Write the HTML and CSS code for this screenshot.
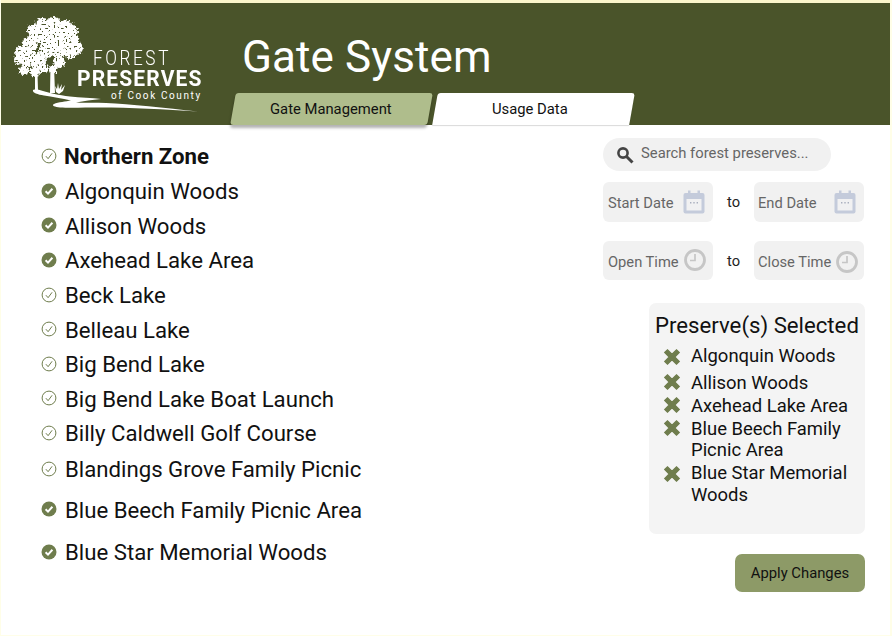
FILE: index.html
```html
<!DOCTYPE html>
<html lang="en">
<head>
<meta charset="utf-8">
<title>Gate System</title>
<link rel="stylesheet" href="styles.css">
</head>
<body>
<div class="page">
  <header class="header">
    <div class="logo">
      <svg class="logo-mark" width="190" height="100" viewBox="13 14 190 100" aria-hidden="true">
        <defs>
          <filter id="leafy" x="-15%" y="-15%" width="130%" height="130%" color-interpolation-filters="sRGB">
            <feTurbulence type="fractalNoise" baseFrequency="0.5" numOctaves="2" seed="7" result="n"/>
            <feDisplacementMap in="SourceGraphic" in2="n" scale="6" xChannelSelector="R" yChannelSelector="G" result="d"/>
            <feColorMatrix in="n" type="matrix" values="0 0 0 0 1  0 0 0 0 1  0 0 0 0 1  0 0 0 14 -4.1" result="holes"/>
            <feComposite in="d" in2="holes" operator="in"/>
          </filter>
        </defs>
        <g fill="#fff" filter="url(#leafy)">
          <circle cx="43" cy="26" r="8"/><circle cx="54" cy="25" r="8"/><circle cx="65" cy="28" r="8"/><circle cx="33" cy="30" r="6"/><circle cx="72" cy="31" r="6"/>
          <circle cx="36" cy="36" r="7"/><circle cx="48" cy="37" r="10"/><circle cx="60" cy="38" r="10"/><circle cx="71" cy="40" r="8"/>
          <circle cx="77" cy="48" r="6"/><circle cx="70" cy="52" r="7"/><circle cx="58" cy="50" r="8"/><circle cx="47" cy="50" r="8"/>
          <circle cx="59" cy="62" r="6"/><circle cx="53" cy="70" r="4"/>
          <circle cx="30" cy="45" r="8"/><circle cx="21" cy="52" r="6"/><circle cx="18" cy="60" r="4"/><circle cx="28" cy="58" r="9"/>
          <circle cx="38" cy="61" r="8"/><circle cx="24" cy="70" r="5"/><circle cx="35" cy="72" r="5"/><circle cx="44" cy="68" r="5"/>
        </g>
        <g fill="#fff">
          <path d="M35 74h2.500l.5 16.500h-3zM50.500 66h3.500l1 27h-5z"/>
          <path d="M56 92l-1-6 2 3 1-6 1 6 3-5-1 6 4-5-2 6-4 3z"/>
          <path d="M33 90C36 89 40 90 43 91C50 93 58 95 70 96.500C80 97.500 92 98 101 99C92 100 84 101 76 102.500C88 103 96 102.500 106 103C130 104 165 108 198 111.500C165 109.500 130 107.500 100 107.500C85 107.500 70 108 60 107.500C55 107 51 105.500 54 104C58 102 66 101.500 71 100.500C62 98 52 97 44 95.500C38 94.500 32 93 33 90Z"/>
        </g>
      </svg>
      <div class="logo-text">
        <span class="logo-forest">FOREST</span>
        <span class="logo-preserves">PRESERVES</span>
        <span class="logo-cook">of Cook County</span>
      </div>
    </div>
    <div class="heading">
      <h1 class="title">Gate System</h1>
      <nav class="tabs">
        <div class="tab tab-active"><span class="tab-label">Gate Management</span></div>
        <div class="tab tab-plain"><span class="tab-label tab-label-shift">Usage Data</span></div>
      </nav>
    </div>
  </header>
  <main class="content">
    <ul class="zones">
      <li class="zone zone-head"><svg class="check" viewBox="0 0 16 16"><circle cx="8" cy="8" r="6.9" fill="none" stroke="#6f7d4d" stroke-width="1"/><path d="M4.9 8.2l2.2 2.5 4-5.4" fill="none" stroke="#6f7d4d" stroke-width="1"/></svg><span>Northern Zone</span></li>
      <li class="zone"><svg class="check" viewBox="0 0 16 16"><circle cx="8" cy="8" r="7.5" fill="#6f7d4d"/><path d="M4.6 8.2l2.4 2.4 4.4-4.8" fill="none" stroke="#fff" stroke-width="2"/></svg><span>Algonquin Woods</span></li>
      <li class="zone"><svg class="check" viewBox="0 0 16 16"><circle cx="8" cy="8" r="7.5" fill="#6f7d4d"/><path d="M4.6 8.2l2.4 2.4 4.4-4.8" fill="none" stroke="#fff" stroke-width="2"/></svg><span>Allison Woods</span></li>
      <li class="zone"><svg class="check" viewBox="0 0 16 16"><circle cx="8" cy="8" r="7.5" fill="#6f7d4d"/><path d="M4.6 8.2l2.4 2.4 4.4-4.8" fill="none" stroke="#fff" stroke-width="2"/></svg><span>Axehead Lake Area</span></li>
      <li class="zone"><svg class="check" viewBox="0 0 16 16"><circle cx="8" cy="8" r="6.9" fill="none" stroke="#6f7d4d" stroke-width="1"/><path d="M4.9 8.2l2.2 2.5 4-5.4" fill="none" stroke="#6f7d4d" stroke-width="1"/></svg><span>Beck Lake</span></li>
      <li class="zone"><svg class="check" viewBox="0 0 16 16"><circle cx="8" cy="8" r="6.9" fill="none" stroke="#6f7d4d" stroke-width="1"/><path d="M4.9 8.2l2.2 2.5 4-5.4" fill="none" stroke="#6f7d4d" stroke-width="1"/></svg><span>Belleau Lake</span></li>
      <li class="zone"><svg class="check" viewBox="0 0 16 16"><circle cx="8" cy="8" r="6.9" fill="none" stroke="#6f7d4d" stroke-width="1"/><path d="M4.9 8.2l2.2 2.5 4-5.4" fill="none" stroke="#6f7d4d" stroke-width="1"/></svg><span>Big Bend Lake</span></li>
      <li class="zone"><svg class="check" viewBox="0 0 16 16"><circle cx="8" cy="8" r="6.9" fill="none" stroke="#6f7d4d" stroke-width="1"/><path d="M4.9 8.2l2.2 2.5 4-5.4" fill="none" stroke="#6f7d4d" stroke-width="1"/></svg><span>Big Bend Lake Boat Launch</span></li>
      <li class="zone"><svg class="check" viewBox="0 0 16 16"><circle cx="8" cy="8" r="6.9" fill="none" stroke="#6f7d4d" stroke-width="1"/><path d="M4.9 8.2l2.2 2.5 4-5.4" fill="none" stroke="#6f7d4d" stroke-width="1"/></svg><span>Billy Caldwell Golf Course</span></li>
      <li class="zone zone-gap-s"><svg class="check" viewBox="0 0 16 16"><circle cx="8" cy="8" r="6.9" fill="none" stroke="#6f7d4d" stroke-width="1"/><path d="M4.9 8.2l2.2 2.5 4-5.4" fill="none" stroke="#6f7d4d" stroke-width="1"/></svg><span>Blandings Grove Family Picnic</span></li>
      <li class="zone zone-gap-m"><svg class="check" viewBox="0 0 16 16"><circle cx="8" cy="8" r="7.5" fill="#6f7d4d"/><path d="M4.6 8.2l2.4 2.4 4.4-4.8" fill="none" stroke="#fff" stroke-width="2"/></svg><span>Blue Beech Family Picnic Area</span></li>
      <li class="zone zone-gap-l"><svg class="check" viewBox="0 0 16 16"><circle cx="8" cy="8" r="7.5" fill="#6f7d4d"/><path d="M4.6 8.2l2.4 2.4 4.4-4.8" fill="none" stroke="#fff" stroke-width="2"/></svg><span>Blue Star Memorial Woods</span></li>
    </ul>
    <aside class="side">
      <div class="search">
        <svg class="search-icon" viewBox="0 0 18 18"><circle cx="7" cy="7" r="4.6" fill="none" stroke="#444" stroke-width="2.6"/><path d="M10.5 10.5l6 6" stroke="#444" stroke-width="3"/></svg>
        <span>Search forest preserves...</span>
      </div>
      <div class="range">
        <div class="field"><span>Start Date</span><svg class="cal" viewBox="0 0 22 24"><rect x="0.500" y="3" width="21" height="20.500" rx="2" fill="#c4cbdb"/><path d="M3.500 9h15v11.500h-15z" fill="#f1f1f2"/><path d="M5 0.500h2.500v4H5zM14.500 0.500H17v4h-2.500z" fill="#c4cbdb"/><path d="M7 12h1.400v1.400H7zM10.300 12h1.400v1.400h-1.400zM13.600 12h1.400v1.400h-1.400z" fill="#aab0bf"/></svg></div>
        <span class="to">to</span>
        <div class="field field-end"><span>End Date</span><svg class="cal" viewBox="0 0 22 24"><rect x="0.500" y="3" width="21" height="20.500" rx="2" fill="#c4cbdb"/><path d="M3.500 9h15v11.500h-15z" fill="#f1f1f2"/><path d="M5 0.500h2.500v4H5zM14.500 0.500H17v4h-2.500z" fill="#c4cbdb"/><path d="M7 12h1.400v1.400H7zM10.300 12h1.400v1.400h-1.400zM13.600 12h1.400v1.400h-1.400z" fill="#aab0bf"/></svg></div>
      </div>
      <div class="range range-time">
        <div class="field"><span>Open Time</span><svg class="clock" viewBox="0 0 22 22"><circle cx="11" cy="11" r="9.500" fill="none" stroke="#c6c6c6" stroke-width="2.800"/><path d="M11 5v6.500H6" fill="none" stroke="#c6c6c6" stroke-width="1.700"/></svg></div>
        <span class="to">to</span>
        <div class="field field-end field-close"><span>Close Time</span><svg class="clock" viewBox="0 0 22 22"><circle cx="11" cy="11" r="9.500" fill="none" stroke="#c6c6c6" stroke-width="2.800"/><path d="M11 5v6.500H6" fill="none" stroke="#c6c6c6" stroke-width="1.700"/></svg></div>
      </div>
      <section class="selected">
        <h2 class="selected-title">Preserve(s) Selected</h2>
        <ul class="selected-list">
          <li class="pick"><svg class="x" viewBox="0 0 16 16"><path d="M1.500 4L4 1.500 8 5.500l4-4L14.500 4l-4 4 4 4L12 14.500l-4-4-4 4L1.500 12l4-4z" fill="#6f7d4d" stroke="#6f7d4d"/></svg><span>Algonquin Woods</span></li>
          <li class="pick pick-b"><svg class="x x-up" viewBox="0 0 16 16"><path d="M1.500 4L4 1.500 8 5.500l4-4L14.500 4l-4 4 4 4L12 14.500l-4-4-4 4L1.500 12l4-4z" fill="#6f7d4d" stroke="#6f7d4d"/></svg><span>Allison Woods</span></li>
          <li class="pick"><svg class="x x-up" viewBox="0 0 16 16"><path d="M1.500 4L4 1.500 8 5.500l4-4L14.500 4l-4 4 4 4L12 14.500l-4-4-4 4L1.500 12l4-4z" fill="#6f7d4d" stroke="#6f7d4d"/></svg><span>Axehead Lake Area</span></li>
          <li class="pick"><svg class="x x-up" viewBox="0 0 16 16"><path d="M1.500 4L4 1.500 8 5.500l4-4L14.500 4l-4 4 4 4L12 14.500l-4-4-4 4L1.500 12l4-4z" fill="#6f7d4d" stroke="#6f7d4d"/></svg><span>Blue Beech Family Picnic Area</span></li>
          <li class="pick"><svg class="x" viewBox="0 0 16 16"><path d="M1.500 4L4 1.500 8 5.500l4-4L14.500 4l-4 4 4 4L12 14.500l-4-4-4 4L1.500 12l4-4z" fill="#6f7d4d" stroke="#6f7d4d"/></svg><span>Blue Star Memorial Woods</span></li>
        </ul>
      </section>
      <button class="apply" type="button">Apply Changes</button>
    </aside>
  </main>
</div>
</body>
</html>
```
FILE: styles.css
```css
* { box-sizing: border-box; }
html, body { margin: 0; height: 100%; }
body { background: #fffee8; font-family: Roboto, "Liberation Sans", sans-serif; color: #111; overflow: hidden; }
.page { width: 889px; height: 635px; margin-left: 1px; border-top: 3px solid #fcf6cb; background: #fff; display: flex; flex-direction: column; }
.header { height: 122px; background: #4a542a; display: flex; flex: none; }
.logo { width: 230px; padding: 11px 0 0 12px; position: relative; flex: none; }
.logo-mark { display: block; }
.logo-text { position: absolute; left: 76px; top: 45px; color: #fff; display: flex; flex-direction: column; width: 125px; }
.logo-forest { font-size: 20px; font-weight: 300; line-height: 20px; letter-spacing: 3px; margin-left: 16px; transform: scaleX(.86); transform-origin: left; white-space: nowrap; }
.logo-preserves { font-size: 22.500px; font-weight: 700; line-height: 20px; letter-spacing: 1.200px; transform: scaleX(.935); transform-origin: left; white-space: nowrap; }
.logo-cook { font-size: 10px; line-height: 12px; letter-spacing: 1.600px; margin: 2px 0 0 34px; white-space: nowrap; }
.heading { display: flex; flex-direction: column; }
.title { margin: 0; padding: 27px 0 0 11px; font-size: 44px; line-height: 55px; font-weight: 400; color: #fff; letter-spacing: .1px; }
.tabs { display: flex; gap: 5.500px; margin-top: 8px; }
.tab { height: 32px; font-size: 14.800px; display: flex; align-items: center; justify-content: center; border-radius: 3px 3px 0 0; padding-right: 2px; transform: skewX(-10deg); }
.tab-label { transform: skewX(10deg); }
.tab-label-shift { margin-right: 6px; }
.tab-active { width: 197px; background: #afbd8c; box-shadow: 0 3px 3px rgba(0,0,0,.3); margin-left: 1.500px; border-radius: 3px; }
.tab-plain { width: 197px; background: #fff; box-shadow: 0 1px 1px rgba(0,0,0,.15); }
.content { flex: 1; display: flex; justify-content: space-between; }
.zones { list-style: none; margin: 0; padding: 13px 0 0 40px; }
.zone { display: flex; align-items: center; font-size: 22.200px; height: 34.600px; gap: 8px; }
.zone-gap-s { margin-top: 1px; }
.zone-gap-m { margin-top: 6px; }
.zone-gap-l { margin-top: 8px; }
.zone-head { font-weight: 700; gap: 7px; height: 36px; padding-bottom: 1px; }
.check { width: 16px; height: 16px; flex: none; margin-top: -1px; }
.zone-head .check { margin-top: 0; }
.side { width: 287px; padding: 13px 26px 0 0; display: flex; flex-direction: column; align-items: flex-start; }
.search { width: 228px; height: 33px; border-radius: 17px; background: #f1f1f1; display: flex; align-items: center; gap: 7px; padding: 0 0 3px 13px; font-size: 14.800px; color: #666; }
.search-icon { width: 18px; height: 18px; margin-top: 3px; }
.range { display: flex; align-items: center; margin-top: 11px; }
.range-time { margin-top: 19px; }
.field { width: 110px; height: 40px; border-radius: 6px; background: #f1f1f1; display: flex; align-items: center; justify-content: space-between; padding: 2px 8px 0 5px; font-size: 14.700px; color: #666; white-space: nowrap; }
.field-end { padding-left: 4px; }
.field .cal { margin-top: -3px; }
.range-time .field { height: 39px; padding-right: 7px; }
.range-time .clock { margin-top: -3px; }
.range-time .field-close { padding-right: 6px; }
.range-time .field-close .clock { margin-top: 0; }
.to { width: 41px; text-align: center; font-size: 14.700px; color: #222; }
.cal { width: 22px; height: 24px; }
.clock { width: 22px; height: 22px; }
.selected { align-self: flex-end; width: 216px; height: 231px; margin: 23px -1px 0 0; background: #f4f4f4; border-radius: 7px; padding: 10px 0 0 6px; }
.selected-title { margin: 0; font-size: 22.200px; line-height: 25px; font-weight: 400; }
.selected-list { list-style: none; margin: 8px 0 0; padding: 0 0 0 8px; }
.pick { display: flex; align-items: flex-start; gap: 10px; font-size: 18.450px; line-height: 21.500px; margin-bottom: 1.500px; width: 195px; }
.pick-b { margin-top: 5px; }
.x { width: 18px; height: 18px; flex: none; margin-top: 2px; }
.x-up { margin-top: 0; }
.apply { align-self: flex-end; width: 130px; height: 37.500px; margin: 20px -1px 0 0; padding: 0; border: 0; border-radius: 7px; background: #8d9a67; color: #111; font: 14.800px Roboto, sans-serif; }
```
